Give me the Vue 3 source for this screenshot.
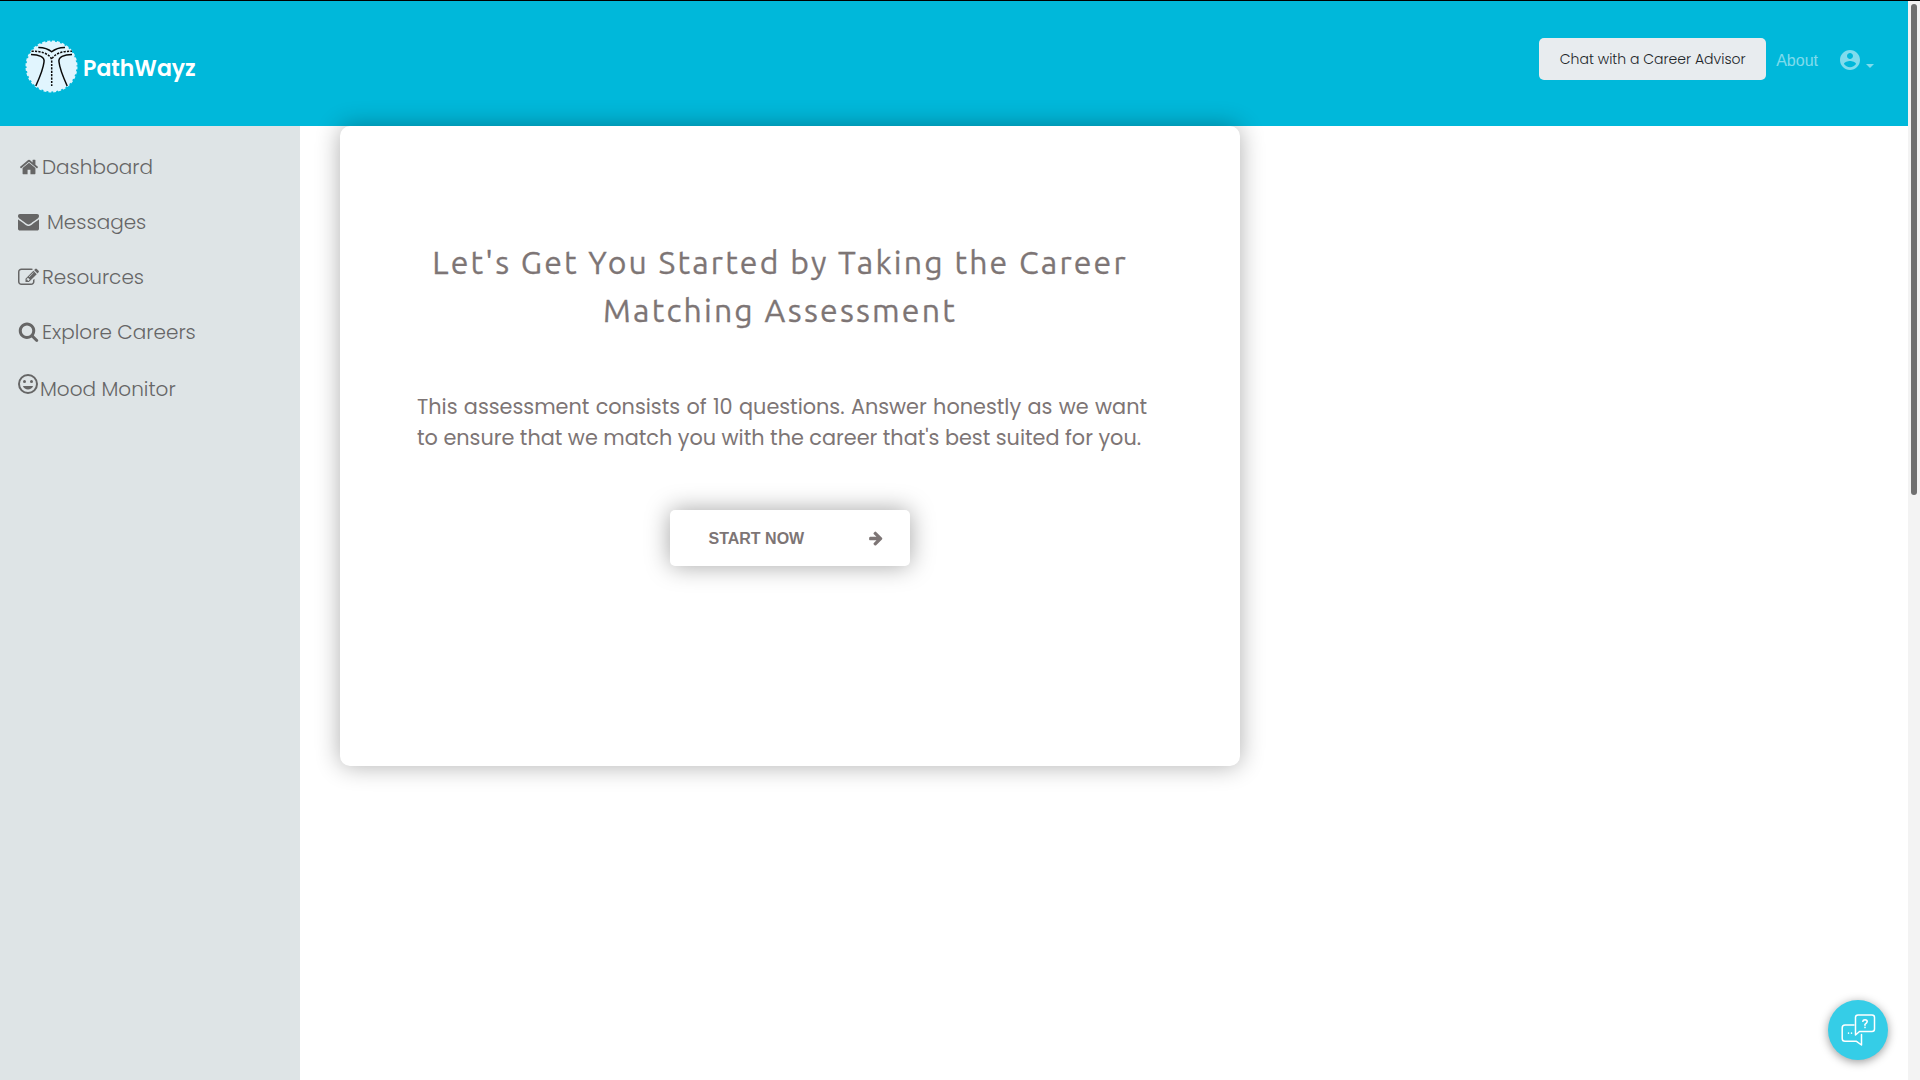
<script setup>
const icons = {
  home: 'M1472 992v480q0 26-19 45t-45 19h-384v-384H768v384H384q-26 0-45-19t-19-45V992q0-1 .5-3t.5-3l575-474 575 474q1 2 1 6zm223-69l-62 74q-8 9-21 11h-3q-13 0-21-7L896 424l-692 577q-12 8-24 7-13-2-21-11l-62-74q-8-10-7-23.500t11-21.500l719-599q32-26 76-26t76 26l244 204V288q0-14 9-23t23-9h192q14 0 23 9t9 23v408l219 182q10 8 11 21.500t-7 23.500z',
  envelope: 'M1792 710v794q0 66-47 113t-113 47H160q-66 0-113-47T0 1504V710q44 49 101 87 362 246 497 345 57 42 92.500 65.500t94.500 48 110 24.500h2q51 0 110-24.500t94.500-48T1194 1142q170-123 498-345 57-39 100-87zm0-294q0 79-49 151t-122 123q-376 261-468 325-10 7-42.500 31t-54 38.500-52 32.500-57.500 27-50 9h-2q-23 0-50-9t-57.500-27-52-32.500-54-38.500-42.500-31q-91-64-262-182.500T172 690q-62-42-117-115.500T0 438q0-78 41.500-130T160 256h1472q65 0 112.500 47t47.500 113z',
  edit: 'M888 1184l116-116-152-152-116 116v56h96v96h56zm440-720q-16-16-33 1L945 815q-17 17-1 33t33-1l350-350q17-17 1-33zm80 594v190q0 119-84.500 203.500T1120 1536H288q-119 0-203.500-84.500T0 1248V416q0-119 84.500-203.500T288 128h832q63 0 117 25 15 7 18 23 3 17-9 29l-49 49q-14 14-32 8-23-6-45-6H288q-66 0-113 47t-47 113v832q0 66 47 113t113 47h832q66 0 113-47t47-113v-126q0-13 9-22l64-64q15-15 35-7t20 29zm-96-738l288 288-672 672H640V992zm444 132l-92 92-288-288 92-92q28-28 68-28t68 28l152 152q28 28 28 68t-28 68z',
  search: 'M1216 832q0-185-131.500-316.500T768 384 451.500 515.500 320 832t131.500 316.500T768 1280t316.500-131.500T1216 832zm512 832q0 52-38 90t-90 38q-54 0-90-38l-343-342q-179 124-399 124-143 0-273.500-55.500t-225-150-150-225T64 832t55.500-273.500 150-225 225-150T768 128t273.500 55.500 225 150 150 225T1472 832q0 220-124 399l343 343q37 37 37 90z',
}
const menu = [
  { label: 'Dashboard', icon: 'home' },
  { label: 'Messages', icon: 'envelope' },
  { label: 'Resources', icon: 'edit' },
  { label: 'Explore Careers', icon: 'search' },
  { label: 'Mood Monitor', icon: 'mood' },
]
</script>

<template>
  <div class="page">
    <div class="view">
      <header class="topbar">
        <a class="brand">
          <svg class="logo" viewBox="24 39 55 55" fill="none">
            <circle cx="51.500" cy="66.500" r="25" fill="#e1f5fe" />
            <circle cx="51.500" cy="66.500" r="25" stroke="#e1f5fe" stroke-width="2" stroke-dasharray="3 1.900" />
            <g stroke="#0a0a0a" stroke-width="1.500">
              <path d="M38.300 47.400C44 47.300 48 48.600 51.700 51.800C55.400 48.600 59.400 47.300 65 47.400" />
              <path d="M31.500 51.300C41 51 49 53.500 51.700 59.300C54.400 53.500 62.400 51 72 51.300" stroke-dasharray="2.200 1.200" />
              <path d="M51.700 60.500V86" stroke-dasharray="2.200 1.200" />
              <path d="M31 54.400C39 54.400 45 57 44 62C43.300 69 38.500 80 35.800 86" />
              <path d="M72 54.400C64 54.400 58 57 59 62C59.700 69 64.500 80 67.200 86" />
            </g>
          </svg>
          <span class="brand-name">PathWayz</span>
        </a>
        <nav class="actions">
          <button class="advisor">Chat with a Career Advisor</button>
          <a class="about">About</a>
          <a class="account">
            <svg class="avatar" viewBox="0 0 24 24"><path d="M12 2C6.480 2 2 6.480 2 12s4.480 10 10 10 10-4.480 10-10S17.520 2 12 2zm0 3c1.660 0 3 1.340 3 3s-1.340 3-3 3-3-1.340-3-3 1.340-3 3-3zm0 14.200c-2.500 0-4.710-1.280-6-3.220.03-1.990 4-3.080 6-3.080 1.990 0 5.970 1.090 6 3.080-1.290 1.940-3.500 3.220-6 3.220z" /></svg>
            <i class="caret"></i>
          </a>
        </nav>
      </header>

      <div class="body">
        <aside class="sidebar">
          <a v-for="item in menu" :key="item.icon" class="item" :class="item.icon">
            <svg v-if="item.icon === 'mood'" class="icon" viewBox="0 0 24 24">
              <path d="M12 2a10 10 0 1 0 0 20 10 10 0 0 0 0-20zm0 18a8 8 0 1 1 0-16 8 8 0 0 1 0 16z" />
              <circle cx="8.500" cy="9.500" r="1.500" />
              <circle cx="15.500" cy="9.500" r="1.500" />
              <path d="M6.900 14h10.200c-.8 2-2.800 3.500-5.100 3.500S7.700 16 6.900 14z" />
            </svg>
            <svg v-else class="icon" viewBox="0 0 1792 1792"><path :d="icons[item.icon]" /></svg>
            <span>{{ item.label }}</span>
          </a>
        </aside>

        <main class="content">
          <section class="card">
            <h1>Let's Get You Started by Taking the Career Matching Assessment</h1>
            <p>This assessment consists of 10 questions. Answer honestly as we want to ensure that we match you with the career that's best suited for you.</p>
            <button class="start">
              <span>START NOW</span>
              <svg viewBox="0 0 1792 1792"><path d="M1600 960q0 54-37 91l-651 651q-39 37-91 37-51 0-90-37l-75-75q-38-38-38-91t38-91l293-293H245q-52 0-84.500-37.500T128 1024V896q0-53 32.500-90.500T245 768h704L656 474q-38-36-38-90t38-90l75-75q38-38 90-38 53 0 91 38l651 651q37 35 37 90z" /></svg>
            </button>
          </section>
        </main>
      </div>
    </div>
    <div class="scrollbar"><div class="thumb"></div></div>

    <button class="chat">
      <svg viewBox="0 0 36 36" fill="none" stroke="#fff" stroke-width="1.500" stroke-linejoin="round" stroke-linecap="round">
        <path d="M14 13H5Q2.200 13 2.200 16V26.500Q2.200 29.300 5 29.300H16.500L21.500 33V22.500" />
        <path d="M18 3H32Q34.500 3 34.500 5.500V17Q34.500 19.500 32 19.500H19.500L15.500 23V5.500Q15.500 3 18 3Z" />
        <path d="M22.800 9.300Q23 7.700 25 7.700Q27.300 7.900 27.200 9.700Q27 11 25 12.300V13.200M25 15.400V15.600" stroke-width="1.600" />
        <path d="M8.500 21v.3M11.500 21v.3" />
      </svg>
    </button>
  </div>
</template>

<style>
body {
  margin: 0;
  overflow: hidden;
}
</style>

<style scoped>
.page {
  display: flex;
  width: 1920px;
  height: 1080px;
  box-sizing: border-box;
  border-top: 1px solid #000;
  background: #fff;
  font-family: 'Poppins', sans-serif;
}
.view {
  flex: 1;
  display: flex;
  flex-direction: column;
}
.topbar {
  display: flex;
  justify-content: space-between;
  align-items: flex-start;
  height: 125px;
  background: #00b8da;
}
.brand {
  display: flex;
  padding: 38px 0 0 24px;
}
.logo {
  width: 55px;
  height: 55px;
}
.brand-name {
  margin: 13px 0 0 4px;
  color: #fff;
  font-size: 22px;
  font-weight: 600;
  line-height: 33px;
}
.actions {
  display: flex;
  align-items: center;
  margin: 37px 34px 0 0;
  height: 42px;
}
button {
  border: 0;
  padding: 0;
  font-family: inherit;
}
.advisor {
  width: 227px;
  height: 42px;
  border-radius: 5px;
  background: #e8ecef;
  color: #212529;
  font-size: 14px;
  font-weight: 300;
}
.about {
  margin: 3px 0 0 10px;
  font: 16px 'Liberation Sans', sans-serif;
  color: rgba(255, 255, 255, 0.5);
}
.account {
  display: flex;
  align-items: center;
  margin: 2px 0 0 20px;
}
.avatar {
  width: 24px;
  height: 24px;
  fill: rgba(255, 255, 255, 0.5);
}
.caret {
  margin: 12px 0 0 4px;
  border: 4px solid transparent;
  border-top-color: rgba(255, 255, 255, 0.5);
  border-bottom: 0;
}
.body {
  flex: 1;
  display: flex;
}
.sidebar {
  display: flex;
  flex-direction: column;
  width: 300px;
  padding-top: 13px;
  box-sizing: border-box;
  background: #dee4e6;
}
.item {
  display: flex;
  align-items: center;
  height: 55px;
  padding-left: 18px;
  color: #666;
  font-size: 20px;
  font-weight: 300;
}
.icon {
  width: 21px;
  height: 21px;
  margin-right: 3px;
  fill: currentColor;
}
.home .icon {
  width: 20px;
  height: 20px;
  margin: 0 3px 0 1px;
}
.envelope .icon {
  margin-right: 8px;
}
.edit .icon {
  margin-top: 2px;
}
.mood {
  height: 60px;
  padding-left: 16px;
}
.mood .icon {
  width: 24px;
  height: 24px;
  margin: 0 0 10px 0;
}
.content {
  flex: 1;
  padding-left: 40px;
}
.card {
  position: relative;
  display: flex;
  flex-direction: column;
  align-items: center;
  width: 900px;
  height: 640px;
  border-radius: 10px;
  background: #fff;
  box-shadow: 0 0 25px rgba(0, 0, 0, 0.32);
  color: #7d7575;
}
h1 {
  width: 730px;
  margin: 112px 0 0;
  padding-right: 20px;
  font: 400 32px/48px 'Ubuntu', sans-serif;
  letter-spacing: 2.190px;
  text-align: center;
  -webkit-text-stroke: 0.3px currentColor;
}
p {
  width: 730px;
  margin: 57px 0 0;
  padding-right: 16px;
  font-size: 20.800px;
  line-height: 31.200px;
  letter-spacing: -0.015px;
  text-align: justify;
}
.start {
  display: flex;
  align-items: center;
  justify-content: space-between;
  width: 240px;
  height: 56px;
  margin-top: 57px;
  padding: 0 26px 0 38.500px;
  box-sizing: border-box;
  border-radius: 5px;
  background: #fff;
  box-shadow: 0 0 25px rgba(0, 0, 0, 0.36);
  color: #7d7575;
  font: bold 16px 'Liberation Sans', sans-serif;
}
.start span {
  margin-top: 1px;
}
.start svg {
  width: 16px;
  height: 16px;
  fill: currentColor;
}
.scrollbar {
  width: 12px;
  background: #f3f3f3;
}
.thumb {
  width: 6px;
  height: 491px;
  margin: 3px 0 0 3px;
  border-radius: 3px;
  background: #707070;
}
.chat {
  position: absolute;
  left: 1828px;
  top: 1000px;
  display: flex;
  align-items: center;
  justify-content: center;
  width: 60px;
  height: 60px;
  border-radius: 50%;
  background: #35cde7;
  box-shadow: 0 2px 10px rgba(0, 0, 0, 0.4);
}
.chat svg {
  width: 36px;
  height: 36px;
}
</style>
